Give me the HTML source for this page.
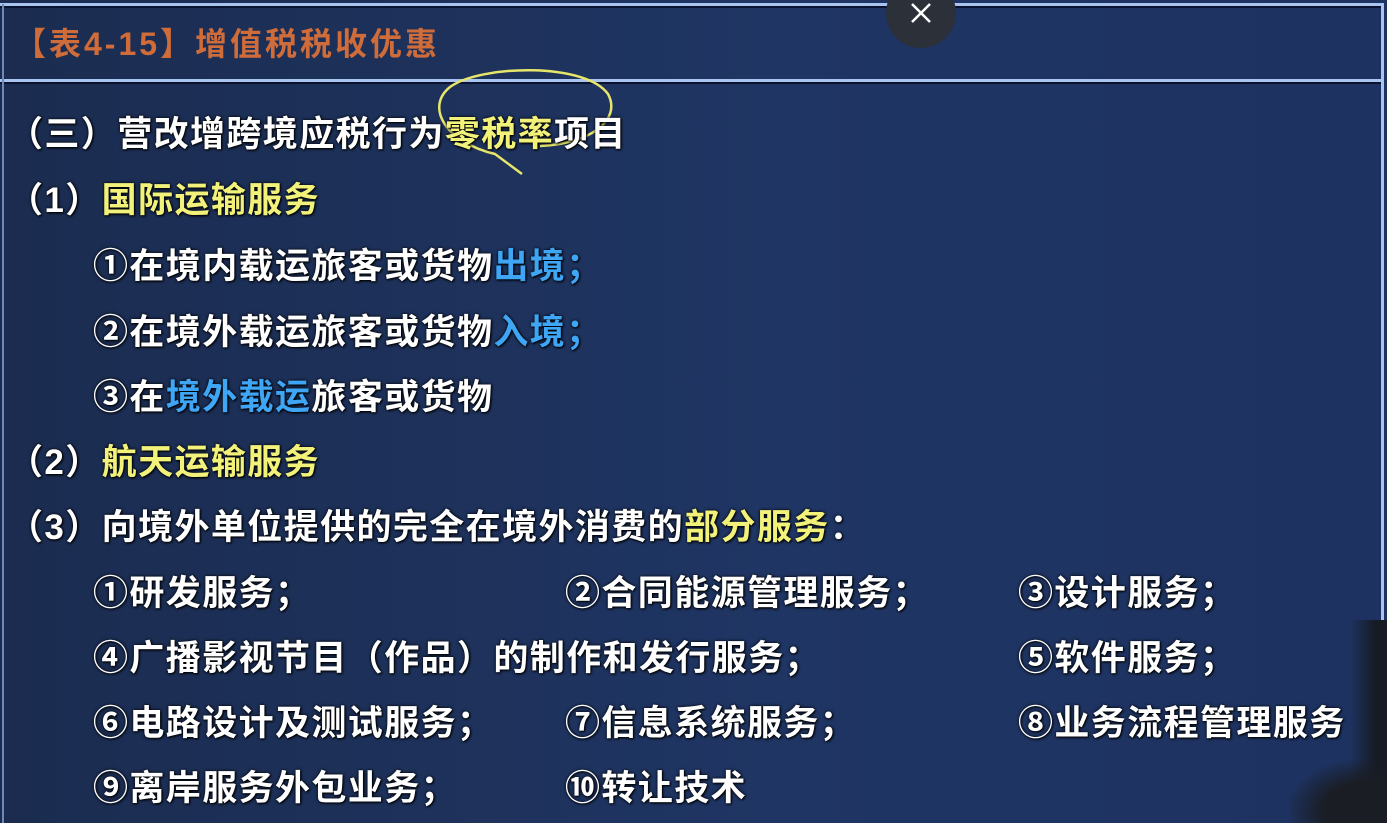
<!DOCTYPE html>
<html><head><meta charset="utf-8"><style>
html,body{margin:0;padding:0}
body{width:1387px;height:823px;overflow:hidden;background:#1d3159;position:relative;font-family:"Liberation Sans","Noto Sans CJK SC",sans-serif;}
.bg{position:absolute;inset:0;background:linear-gradient(90deg,#1b2c50 0%,#1f3563 55%,#1d3260 100%);}
.hl{position:absolute;left:0;width:1384px;height:3px;background:#a9c4ef;box-shadow:0 2px 0 #0a1430;}
.vl{position:absolute;top:4px;width:3px;height:819px;background:#a9c4ef;}
.t{position:absolute;white-space:nowrap;font-size:35px;font-weight:bold;color:#fff;letter-spacing:1.4px;line-height:40px;text-shadow:0 0 3px #000,1px 1px 2px #000;}
.y{color:#f2f27a}.b{color:#3ea6f5}
.title{position:absolute;left:14px;top:24px;font-size:32px;font-weight:bold;color:#cf6c3a;letter-spacing:3px;line-height:40px;white-space:nowrap}
.close{position:absolute;left:886px;top:-22px;width:70px;height:70px;border-radius:50%;background:#2b3039;}
</style></head><body>
<div class="bg"></div>
<div class="hl" style="top:3px"></div>
<div class="hl" style="top:79px"></div>
<div class="vl" style="left:1381px"></div>
<div class="vl" style="left:2px;width:2px;background:#6f88b8"></div>
<div class="title">【表4-15】增值税税收优惠</div>
<div class="close"></div>
<svg style="position:absolute;left:909px;top:2px" width="24" height="22"><path d="M3 2L21 20M21 2L3 20" stroke="#fff" stroke-width="2.5"/></svg>
<svg style="position:absolute;left:420px;top:62px" width="210" height="120"><path d="M102 112 L75 92 C25 80 5 45 30 25 C60 3 165 0 188 32 C202 58 170 82 120 84" fill="none" stroke="#e8e66a" stroke-width="2.5"/></svg>
<div class="t" style="left:8px;top:115px">（三）营改增跨境应税行为<span class="y">零税率</span>项目</div>
<div class="t" style="left:8px;top:181px">（1）<span class="y">国际运输服务</span></div>
<div class="t" style="left:93px;top:247px">①在境内载运旅客或货物<span class="b">出境；</span></div>
<div class="t" style="left:93px;top:313px">②在境外载运旅客或货物<span class="b">入境；</span></div>
<div class="t" style="left:93px;top:378px">③在<span class="b">境外载运</span>旅客或货物</div>
<div class="t" style="left:8px;top:443px">（2）<span class="y">航天运输服务</span></div>
<div class="t" style="left:8px;top:508px">（3）向境外单位提供的完全在境外消费的<span class="y">部分服务</span>：</div>
<div class="t" style="left:93px;top:574px">①研发服务；</div>
<div class="t" style="left:565px;top:574px">②合同能源管理服务；</div>
<div class="t" style="left:1018px;top:574px">③设计服务；</div>
<div class="t" style="left:93px;top:639px">④广播影视节目（作品）的制作和发行服务；</div>
<div class="t" style="left:1018px;top:639px">⑤软件服务；</div>
<div class="t" style="left:93px;top:704px">⑥电路设计及测试服务；</div>
<div class="t" style="left:565px;top:704px">⑦信息系统服务；</div>
<div class="t" style="left:1018px;top:704px">⑧业务流程管理服务</div>
<div class="t" style="left:93px;top:769px">⑨离岸服务外包业务；</div>
<div class="t" style="left:565px;top:769px">⑩转让技术</div>
<div style="position:absolute;left:1350px;top:620px;width:37px;height:203px;background:linear-gradient(90deg,rgba(20,25,35,0),#161b24 70%)"></div>
<div style="position:absolute;left:1290px;top:760px;width:97px;height:63px;background:radial-gradient(ellipse at 80% 80%,#1a1d24 40%,rgba(26,29,36,0) 75%)"></div>
</body></html>
